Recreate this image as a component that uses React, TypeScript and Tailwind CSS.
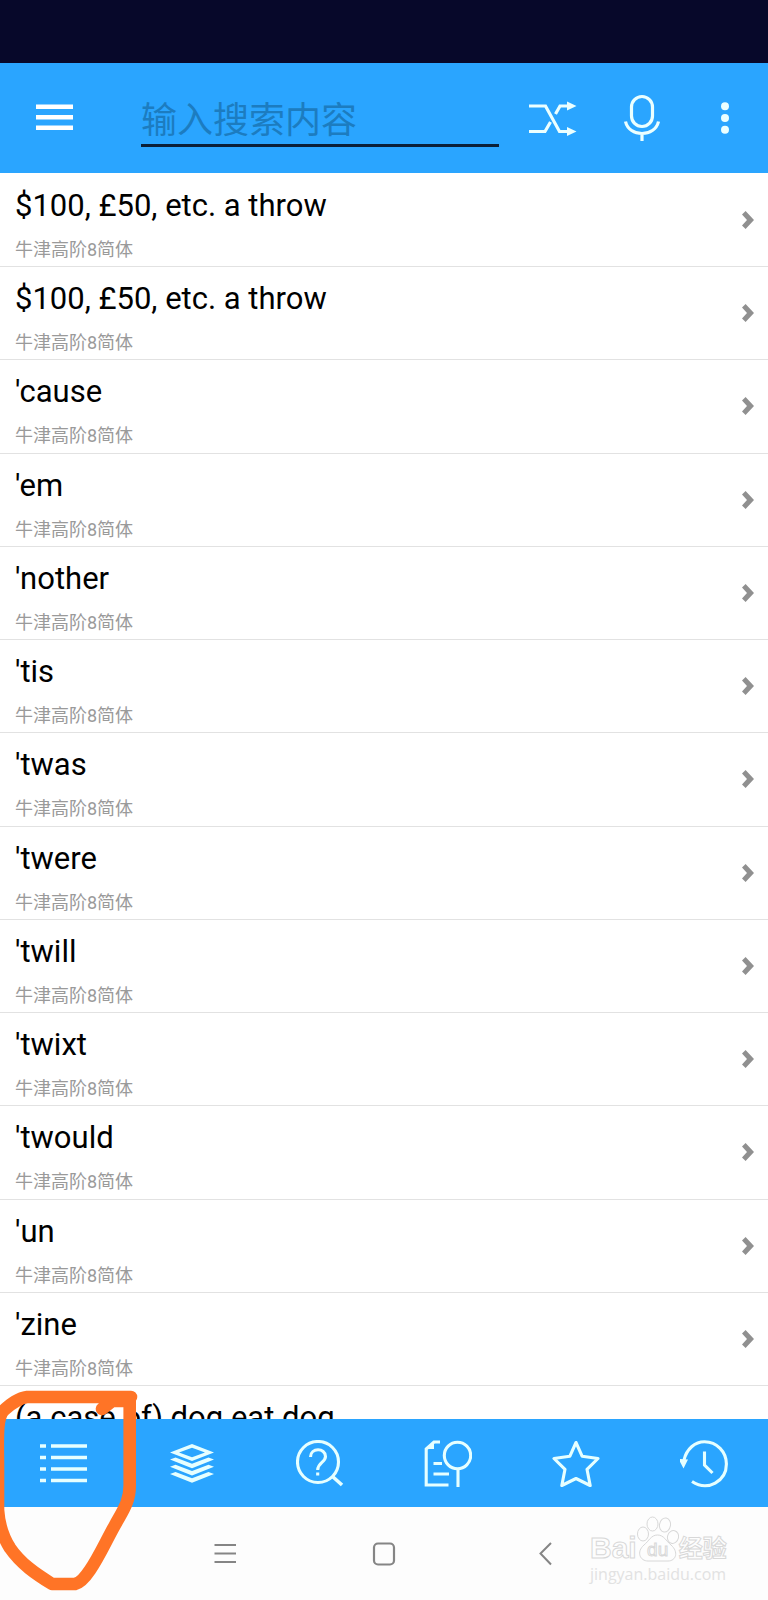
// src/App.tsx
import type { ReactNode } from 'react';

const SOURCE = '牛津高阶8简体';

const entries = [
  { word: '$100, £50, etc. a throw', source: SOURCE },
  { word: '$100, £50, etc. a throw', source: SOURCE },
  { word: "'cause", source: SOURCE },
  { word: "'em", source: SOURCE },
  { word: "'nother", source: SOURCE },
  { word: "'tis", source: SOURCE },
  { word: "'twas", source: SOURCE },
  { word: "'twere", source: SOURCE },
  { word: "'twill", source: SOURCE },
  { word: "'twixt", source: SOURCE },
  { word: "'twould", source: SOURCE },
  { word: "'un", source: SOURCE },
  { word: "'zine", source: SOURCE },
  { word: '(a case of) dog eat dog' },
];

function TabIcon({ children }: { children: ReactNode }) {
  return (
    <svg viewBox="0 0 48 48" className="size-12" fill="none" stroke="currentColor" strokeWidth="3.1" aria-hidden="true">
      {children}
    </svg>
  );
}

const tabs = [
  {
    label: 'Word list',
    icon: <path d="M0 6h6M11 6h36M0 17.5h6M11 17.5h36M0 29h6M11 29h36M0 40.5h6M11 40.5h36" strokeWidth="3.4" />,
  },
  {
    label: 'Dictionaries',
    icon: (
      <g fill="currentColor" stroke="none">
        <path fillRule="evenodd" d="M24 4L46 12.500L24 21L2 12.500ZM24 7.800L11 12.500L24 17.200L37 12.500Z" />
        <path d="M2 19.500L7.500 17.500L24 23.800L40.500 17.500L46 19.500L24 28.200Z" />
        <path d="M2 26.700L7.500 24.700L24 31L40.500 24.700L46 26.700L24 35.400Z" />
        <path d="M2 34L7.500 32L24 38.300L40.500 32L46 34L24 42.700Z" />
      </g>
    ),
  },
  {
    label: 'Full search',
    icon: (
      <>
        <circle cx="22" cy="22" r="20.500" />
        <path d="M36.500 36.500L46 45" strokeWidth="3.6" />
        <path d="M14.500 17C14.500 7.500 29.500 7.500 29.500 16.500C29.500 22.500 21.700 22.500 21.700 30M21.700 32.500V35.500" />
      </>
    ),
  },
  {
    label: 'Text lookup',
    icon: (
      <>
        <path d="M16 2H10L2.200 9V45H24.500M9.500 23.500H18M9.500 34H25M34 29.500V47" />
        <path d="M10 2V9H2.500Z" fill="currentColor" stroke="none" />
        <circle cx="33.500" cy="15.500" r="13.200" />
      </>
    ),
  },
  {
    label: 'Favorites',
    icon: (
      <path
        d="M24 2.500L30.200 16.300L46 18.500L35 29.300L38.200 45.500L24 38.500L9.800 45.500L13 29.300L2 18.500L17.800 16.300Z"
        strokeLinejoin="round"
      />
    ),
  },
  {
    label: 'History',
    icon: (
      <>
        <path d="M4 20C6.500 9 15 1.700 24.500 1.700C37 1.700 46.400 12 46.400 24C46.400 41 28 52 12 41.500" />
        <path d="M-1.500 19L8 19.500L3.500 28.500Z" fill="currentColor" stroke="none" />
        <path d="M24.500 11.500V25L32.500 33" />
      </>
    ),
  },
];

function Header() {
  return (
    <header className="flex h-[110px] shrink-0 items-center bg-[#2aa5ff] pr-[39px] pl-9 text-[#ebffff]">
      <button type="button" aria-label="Menu" className="mr-[68px] shrink-0">
        <svg viewBox="0 0 37 28" className="h-7 w-[37px]" stroke="white" strokeWidth="4.6" aria-hidden="true">
          <path d="M0 2.800h37M0 13.200h37M0 23.700h37" />
        </svg>
      </button>
      <input
        type="text"
        aria-label="输入搜索内容"
        placeholder="输入搜索内容"
        className="h-[58px] min-w-0 flex-1 border-b-[3px] border-[#0b1f38] bg-transparent pt-2 text-[36px] text-black outline-none placeholder:text-[#1c7cc0]"
      />
      <button type="button" aria-label="Shuffle" className="ml-[30px] shrink-0">
        <svg viewBox="0 0 48 36" className="h-9 w-12" fill="none" stroke="currentColor" strokeWidth="3.2" aria-hidden="true">
          <path d="M0 6H16.500L30.500 31.500H39M0 31.500H16L21.500 22M26.500 14L31 6H39" />
          <path d="M38 1.500L47.500 6L38 10.500ZM38 27L47.500 31.500L38 36Z" fill="currentColor" stroke="none" />
        </svg>
      </button>
      <button type="button" aria-label="Voice search" className="ml-[47px] shrink-0">
        <svg viewBox="0 0 36 48" className="h-12 w-9" fill="none" stroke="currentColor" strokeWidth="3.2" aria-hidden="true">
          <rect x="7.500" y="2.500" width="21" height="30" rx="10.500" />
          <path d="M1.500 27.500C5 43.500 31 43.500 34.500 27.500M18 39.500V47" />
        </svg>
      </button>
      <button type="button" aria-label="More options" className="ml-[61px] shrink-0">
        <svg viewBox="0 0 8 32" className="h-8 w-2" fill="currentColor" aria-hidden="true">
          <circle cx="4" cy="4.300" r="4" />
          <circle cx="4" cy="16" r="4" />
          <circle cx="4" cy="27.700" r="4" />
        </svg>
      </button>
    </header>
  );
}

function EntryRow({ word, source }: { word: string; source?: string }) {
  return (
    <li className="overflow-hidden border-b border-[#e2e2e2] last:border-b-0">
      <a href="#" className="flex min-h-[92px] items-center justify-between pr-[14px] pl-[15px]">
        <div className="self-start pt-3">
          <div className="text-[31px] leading-10 text-black">{word}</div>
          {source && <div className="mt-3 text-[18px] leading-6 text-[#9a9a9a]">{source}</div>}
        </div>
        <svg viewBox="0 0 12 18" className="h-[18px] w-3" fill="#909090" aria-hidden="true">
          <path d="M3.600 0L12 9L3.600 18L0 14.600L5 9L0 3.400Z" />
        </svg>
      </a>
    </li>
  );
}

function TabBar() {
  return (
    <nav className="grid h-[88px] shrink-0 grid-cols-6 bg-[#2aa5ff] pt-0.5 text-[#e6ffff]">
      {tabs.map((tab) => (
        <button key={tab.label} type="button" aria-label={tab.label} className="flex items-center justify-center">
          <TabIcon>{tab.icon}</TabIcon>
        </button>
      ))}
    </nav>
  );
}

function SystemNav() {
  return (
    <div className="grid h-[93px] shrink-0 grid-cols-3 bg-[#fdfdfd] px-36 text-[#858585]">
      <button type="button" aria-label="Recent apps" className="flex items-center justify-center">
        <svg viewBox="0 0 24 24" className="size-6" stroke="currentColor" strokeWidth="2" aria-hidden="true">
          <path d="M2.500 3h21.500M2.500 11.500h21.500M2.500 20h21.500" />
        </svg>
      </button>
      <button type="button" aria-label="Home" className="flex items-center justify-center">
        <svg viewBox="0 0 24 24" className="size-6" fill="none" stroke="currentColor" strokeWidth="2.2" aria-hidden="true">
          <rect x="2" y="1.500" width="20" height="21" rx="4" />
        </svg>
      </button>
      <button type="button" aria-label="Back" className="flex items-center justify-center">
        <svg viewBox="0 0 24 24" className="size-6" fill="none" stroke="currentColor" strokeWidth="2" aria-hidden="true">
          <path d="M19 1L8.500 11.500L19 22.500" />
        </svg>
      </button>
    </div>
  );
}

function Watermark() {
  return (
    <div className="pointer-events-none absolute right-10 bottom-3.5 w-[138px] whitespace-nowrap font-['Open_Sans','Noto_Sans_CJK_SC',sans-serif] text-[#fdfdfd] [-webkit-text-stroke:1px_#d8d8d8]">
      <div className="flex items-end">
        <span className="font-['Liberation_Sans',sans-serif] text-[30px] leading-7 font-bold">Bai</span>
        <div className="relative flex h-[46px] w-[42px] shrink-0 items-end justify-center">
          <svg viewBox="0 0 42 46" className="absolute inset-0 h-[46px] w-[42px]" fill="#fdfdfd" stroke="#d8d8d8" aria-hidden="true">
            <ellipse cx="6" cy="18" rx="5.500" ry="7" />
            <ellipse cx="15.500" cy="8" rx="5.500" ry="7" />
            <ellipse cx="28" cy="9" rx="5.500" ry="7" transform="rotate(10 28 9)" />
            <ellipse cx="36" cy="21" rx="5.500" ry="6.500" transform="rotate(15 36 21)" />
            <path d="M20.500 19C14 19 12 25 7 29C-1 36 3 45 11 45H31C39 45 42 36 34 29C29 25 27 19 20.500 19Z" />
          </svg>
          <span className="relative font-['Liberation_Sans',sans-serif] text-[19px] leading-6">du</span>
        </div>
        <span className="text-[24px] leading-7 font-bold">经验</span>
      </div>
      <div className="text-[16px] leading-6 text-[#e2e2e2] [-webkit-text-stroke:0px]">jingyan.baidu.com</div>
    </div>
  );
}

// Hand-drawn circle around the first tab
function Highlight() {
  return (
    <svg
      viewBox="0 0 160 240"
      className="pointer-events-none absolute bottom-0 left-0 h-60 w-40"
      fill="none"
      stroke="#ff7426"
      strokeWidth="12.6"
      strokeLinecap="round"
      strokeLinejoin="round"
      aria-hidden="true"
    >
      <path d="M131 37H27C18 38 10 45 4 50C-4 58 -2 80 -2 110V150C-1 165 3 177 10 188C21 204 36 214 52 224H75C80 223 86 216 90 210C99 197 106 181 115 165C122 152 130 142 129.700 125V41H112L102 49" />
    </svg>
  );
}

export default function App() {
  return (
    <div className="relative flex min-h-screen flex-col overflow-hidden bg-white font-[Roboto,'Noto_Sans_CJK_SC',sans-serif]">
      <div className="h-[63px] shrink-0 bg-[#07082a]" />
      <Header />
      <ul className="grid flex-1 grid-rows-[repeat(13,minmax(93px,1fr))_33px] pt-px">
        {entries.map((entry, i) => (
          <EntryRow key={i} word={entry.word} source={entry.source} />
        ))}
      </ul>
      <TabBar />
      <SystemNav />
      <Watermark />
      <Highlight />
    </div>
  );
}
